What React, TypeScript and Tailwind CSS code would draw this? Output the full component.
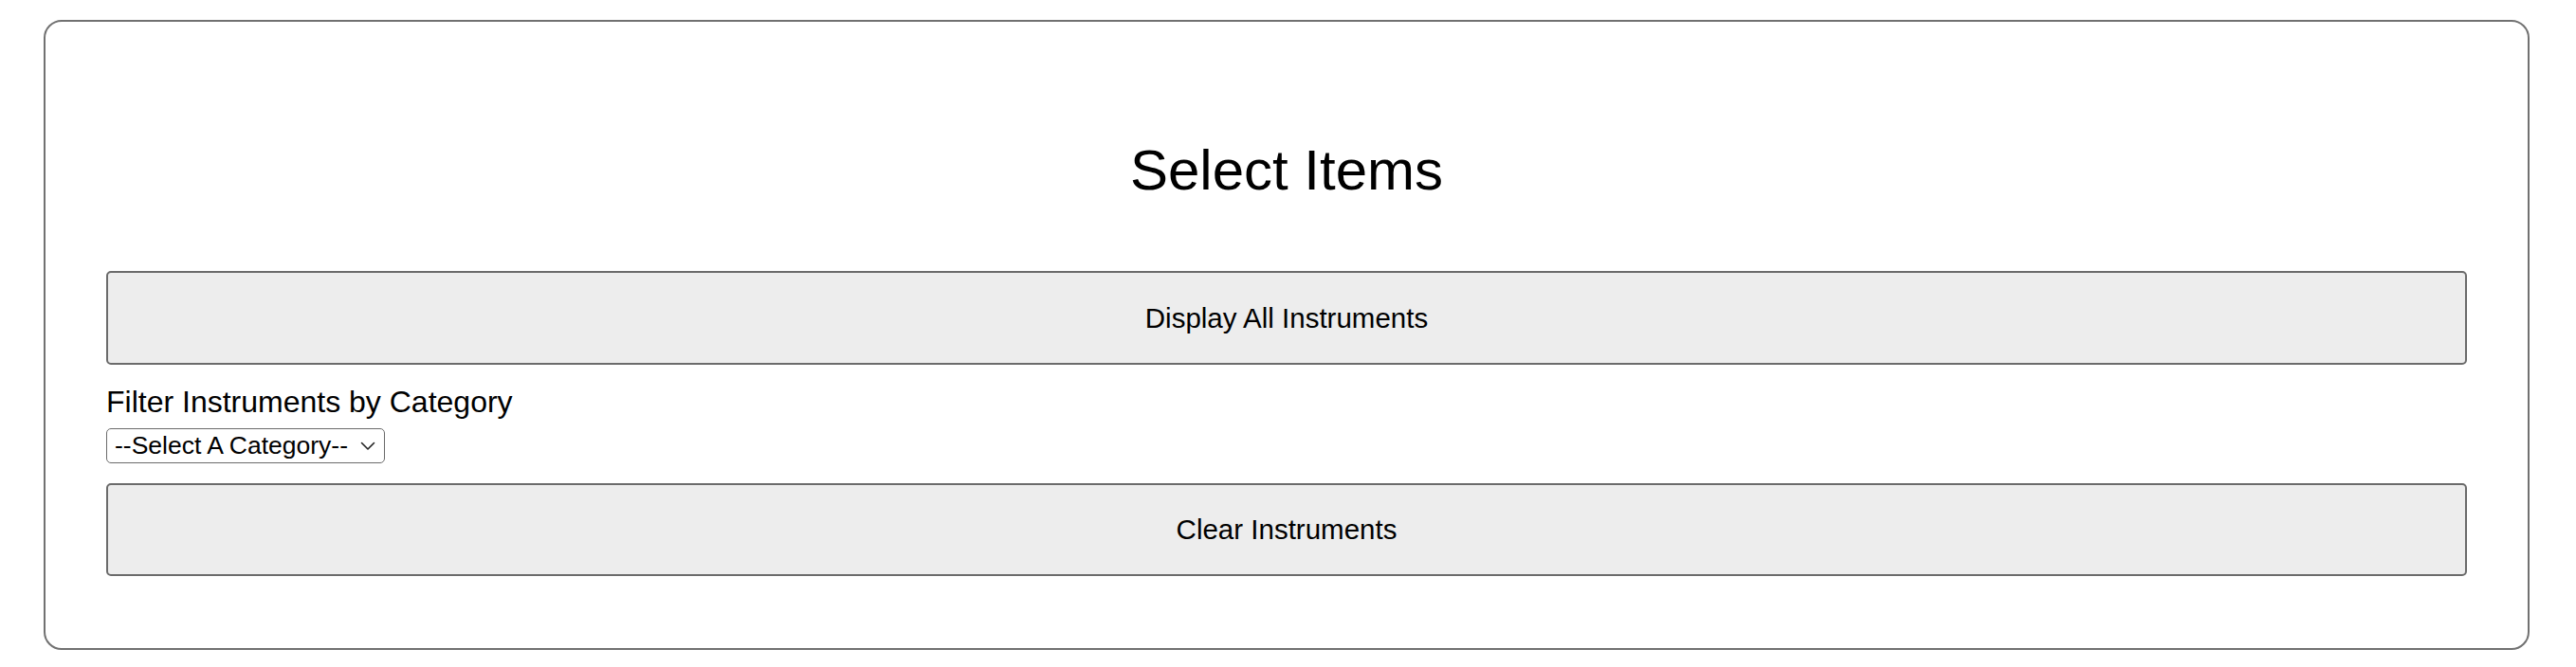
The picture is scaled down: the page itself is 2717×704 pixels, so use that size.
import { useState } from 'react'

const categories = ['--Select A Category--', 'Brass', 'Percussion', 'Strings', 'Woodwind']

export default function App() {
  const [category, setCategory] = useState(categories[0])

  return (
    <div className="min-h-screen bg-white pt-[21px] pl-[46px] pr-[49px] font-['Liberation_Sans',Arial,sans-serif] text-black">
      <div className="rounded-[19px] border-2 border-[#717171] px-[64px] pt-[127px] pb-[76px]">
        <h1 className="text-center text-[60px] leading-none font-normal">Select Items</h1>

        <button className="mt-[76px] flex h-[99px] w-full items-center justify-center rounded-[5px] border-2 border-[#6b6b6b] bg-[#ededed] text-[29.5px] leading-none">
          Display All Instruments
        </button>

        <label htmlFor="category" className="mt-[23px] block text-[32px] leading-none">
          Filter Instruments by Category
        </label>

        <div className="relative mt-[12px] w-[294px]">
          <select
            id="category"
            value={category}
            onChange={(e) => setCategory(e.target.value)}
            className="h-[37px] w-full appearance-none rounded-[5px] border-[1.5px] border-[#6b6b6b] bg-white pl-[8px] text-[26.5px] leading-none outline-none"
          >
            {categories.map((c) => (
              <option key={c} value={c}>
                {c}
              </option>
            ))}
          </select>
          <svg
            className="pointer-events-none absolute right-[10px] top-[14px]"
            width="16"
            height="10"
            viewBox="0 0 16 10"
            fill="none"
            stroke="#222"
            strokeWidth="1.6"
            strokeLinecap="round"
            strokeLinejoin="round"
          >
            <path d="M1.5 1.5 L8 8 L14.5 1.5" />
          </svg>
        </div>

        <button className="mt-[21px] flex h-[98px] w-full items-center justify-center rounded-[5px] border-2 border-[#6b6b6b] bg-[#ededed] text-[29.5px] leading-none">
          Clear Instruments
        </button>
      </div>
    </div>
  )
}
